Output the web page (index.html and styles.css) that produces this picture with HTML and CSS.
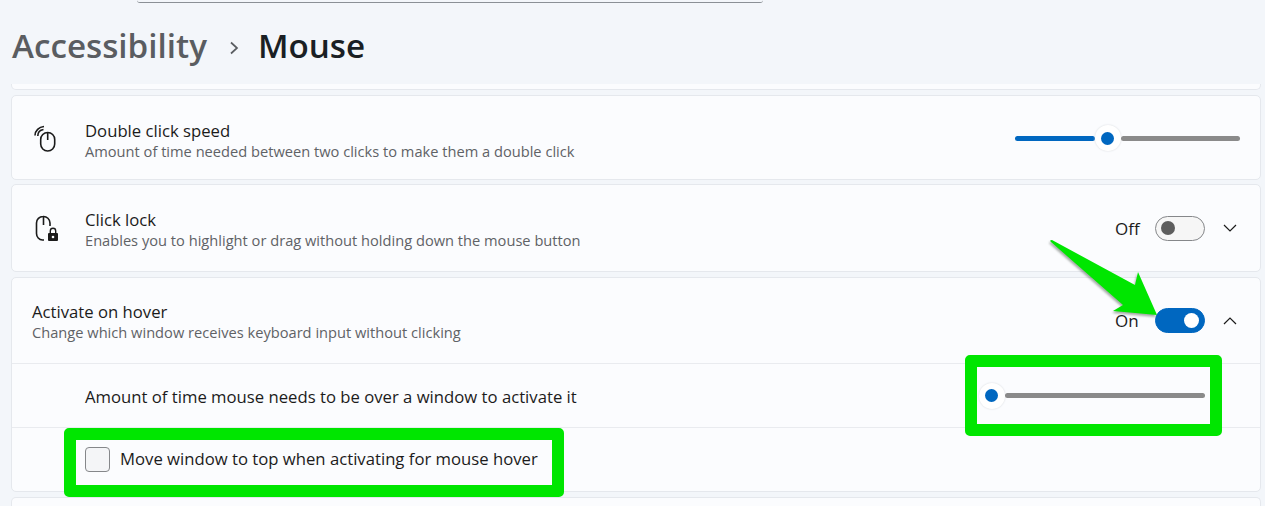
FILE: index.html
```html
<!DOCTYPE html>
<html lang="en">
<head>
    <meta charset="UTF-8">
    <meta name="viewport" content="width=device-width, initial-scale=1.0">
    <title>Mouse</title>
    <link rel="stylesheet" href="styles.css">
</head>
<body>
    <div class="search"></div>

    <h1 class="crumbs">
        <span class="parent">Accessibility</span>
        <svg class="crumb-arrow" width="14" height="14" viewBox="0 0 14 14"><path d="M4 1.500 L10 7 L4 12.500" fill="none" stroke="#5a5d61" stroke-width="1.700"/></svg>
        <span class="current">Mouse</span>
    </h1>

    <div class="list">
        <div class="card card-cut"></div>

        <div class="card card-speed row">
            <svg class="icon" width="26" height="28" viewBox="0 0 26 28">
                <g fill="none" stroke="#1b1b1b" stroke-width="1.600">
                    <rect x="7.700" y="8.500" width="14" height="18.500" rx="7"/>
                    <path d="M14.700 9 V16"/>
                    <path d="M4.800 12 C4.800 8.500 7 6 10.500 5.500"/>
                    <path d="M2 11.500 C2 6.500 6 3 11 2.500"/>
                </g>
            </svg>
            <div class="text">
                <div class="title">Double click speed</div>
                <div class="desc">Amount of time needed between two clicks to make them a double click</div>
            </div>
            <div class="slider slider-speed">
                <div class="fill"></div>
                <div class="thumb"><span></span></div>
                <div class="rest"></div>
            </div>
        </div>

        <div class="card card-lock row">
            <svg class="icon" width="26" height="28" viewBox="0 0 26 28">
                <g fill="none" stroke="#1b1b1b" stroke-width="1.600">
                    <path d="M11 26 H9.500 A6.500 6.500 0 0 1 3.500 19.500 V9 A6.500 6.500 0 0 1 10 2.500 A6.500 6.500 0 0 1 17 9 V12"/>
                    <path d="M10.500 3 V11"/>
                </g>
                <rect x="15" y="19" width="10" height="8" rx="1" fill="#1b1b1b"/>
                <path d="M17.300 19 V17 a2.700 2.700 0 0 1 5.400 0 V19" fill="none" stroke="#1b1b1b" stroke-width="1.400"/>
                <circle cx="20" cy="23" r="1.300" fill="#fbfcfe"/>
            </svg>
            <div class="text">
                <div class="title">Click lock</div>
                <div class="desc">Enables you to highlight or drag without holding down the mouse button</div>
            </div>
            <div class="controls">
                <span class="state">Off</span>
                <div class="toggle"><span></span></div>
                <svg class="chevron" width="14" height="8" viewBox="0 0 14 8"><path d="M1 1 L7 7 L13 1" fill="none" stroke="#1b1b1b" stroke-width="1.200"/></svg>
            </div>
        </div>

        <div class="card card-hover">
            <div class="row row-head">
                <div class="text">
                    <div class="title">Activate on hover</div>
                    <div class="desc">Change which window receives keyboard input without clicking</div>
                </div>
                <div class="controls">
                    <span class="state">On</span>
                    <div class="toggle on"><span></span></div>
                    <svg class="chevron" width="14" height="8" viewBox="0 0 14 8"><path d="M1 7 L7 1 L13 7" fill="none" stroke="#1b1b1b" stroke-width="1.200"/></svg>
                </div>
            </div>
            <div class="row row-sub">
                <div class="title">Amount of time mouse needs to be over a window to activate it</div>
                <div class="slider slider-time">
                    <div class="thumb"><span></span></div>
                    <div class="rest"></div>
                </div>
            </div>
            <div class="row row-check">
                <div class="checkbox"></div>
                <div class="title">Move window to top when activating for mouse hover</div>
            </div>
        </div>

        <div class="card card-next"></div>
    </div>

    <!-- green markup drawn on top of the screenshot -->
    <div class="mark mark-slider"></div>
    <div class="mark mark-check"></div>
    <svg class="arrow" width="130" height="100" viewBox="0 0 130 100">
        <path d="M3 5 Q1 3 4 3 L87 48 L90 35 L109 78 L65 74 L75 68 Z" fill="#00e600"/>
    </svg>
</body>
</html>
```

FILE: styles.css
```css
* {
    box-sizing: border-box;
}

html, body {
    margin: 0;
    height: 506px;
    overflow: hidden;
}

body {
    position: relative;
    background: #f3f6fa;
    color: #1b1b1b;
    font-family: "Open Sans", "Liberation Sans", sans-serif;
}

.search {
    width: 626px;
    height: 3px;
    margin-left: 137px;
    border-bottom: 1px solid #8b9096;
    border-radius: 0 0 6px 6px;
}

.crumbs {
    display: flex;
    align-items: center;
    height: 81px;
    margin: 0;
    padding: 4px 0 0 12px;
    font-size: 33.2px;
    font-weight: 600;
}

.parent {
    color: #5a5d61;
}

.crumb-arrow {
    margin: 4px 17px 0 20px;
}

.current {
    color: #1a1f24;
}

.list {
    display: flex;
    flex-direction: column;
    gap: 5px;
    margin: 0 4px 0 11px;
}

.card {
    flex: none;
    background: #fbfcfe;
    border: 1px solid #e5e8ed;
    border-radius: 5px;
}

.card-cut {
    height: 6px;
    border-top: 0;
    border-radius: 0 0 5px 5px;
}

.card-speed {
    height: 85px;
    margin-bottom: -1px;
}

.card-lock {
    height: 88px;
}

.card-hover {
    height: 215px;
}

.card-next {
    height: 9px;
    border-bottom: 0;
    border-radius: 5px 5px 0 0;
}

.row {
    display: flex;
    align-items: center;
}

.card-speed, .card-lock {
    padding: 0 20px 0 21px;
}

.icon {
    flex: none;
    margin-right: 26px;
}

.text {
    flex: 1;
    padding-top: 1px;
}

.card-speed .text {
    padding-top: 6px;
}

.card-lock .text {
    padding-top: 2px;
}

.title {
    font-size: 16.7px;
    line-height: 21px;
}

.desc {
    font-size: 14.65px;
    line-height: 20px;
    color: #5f6266;
}

.slider {
    display: flex;
    align-items: center;
    height: 26px;
}

.slider-speed {
    width: 225px;
    margin-top: 1px;
}

.slider-time {
    width: 226px;
    margin-left: auto;
}

.fill, .rest {
    height: 5px;
    border-radius: 3px;
}

.fill {
    width: 80px;
    background: #0067c0;
}

.rest {
    flex: 1;
    background: #8a8a8a;
}

.thumb {
    display: flex;
    align-items: center;
    justify-content: center;
    flex: none;
    width: 26px;
    height: 26px;
    padding-right: 2px;
    border-radius: 50%;
    background: #fff;
    box-shadow: 0 0 2px #d5d8dc;
}

.thumb span {
    width: 13px;
    height: 13px;
    border-radius: 50%;
    background: #0067c0;
}

.controls {
    display: flex;
    align-items: center;
    flex: none;
}

.state {
    width: 40px;
    font-size: 17px;
}

.toggle {
    display: flex;
    align-items: center;
    width: 50px;
    height: 25px;
    padding-left: 5px;
    border: 1px solid #85878a;
    border-radius: 13px;
    background: #f6f6f6;
}

.toggle span {
    width: 14px;
    height: 14px;
    border-radius: 50%;
    background: #5d5d5d;
}

.toggle.on {
    justify-content: flex-end;
    padding: 0 5px 0 0;
    border-color: #0067c0;
    background: #0067c0;
}

.toggle.on span {
    width: 15px;
    height: 15px;
    background: #fff;
}

.chevron {
    margin: 0 3px 0 18px;
}

.row-head {
    height: 86px;
    padding: 0 20px 0 20px;
    border-bottom: 1px solid #e9ebef;
}

.row-sub {
    height: 64px;
    padding: 0 55px 0 73px;
    border-bottom: 1px solid #e9ebef;
}

.row-sub .title {
    margin-top: 2px;
}

.row-check {
    height: 63px;
    padding-left: 73px;
}

.row-check .title {
    margin-bottom: 2px;
}

.checkbox {
    flex: none;
    width: 25px;
    height: 25px;
    margin-right: 10px;
    border: 1px solid #85878a;
    border-radius: 4px;
    background: #f4f5f7;
}

.mark {
    position: absolute;
    border: 12px solid #00e600;
    border-radius: 5px;
}

.mark-slider {
    left: 965px;
    top: 355px;
    width: 257px;
    height: 81px;
}

.mark-check {
    left: 64px;
    top: 428px;
    width: 500px;
    height: 69px;
}

.arrow {
    position: absolute;
    left: 1048px;
    top: 237px;
    filter: drop-shadow(-1px 2px 1px rgba(60, 70, 60, 0.45));
}
```
